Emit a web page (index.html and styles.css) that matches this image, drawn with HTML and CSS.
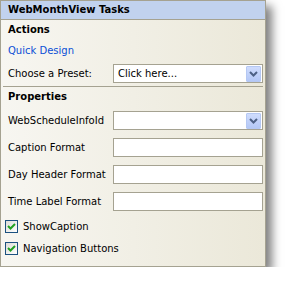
FILE: index.html
```html
<!DOCTYPE html>
<html lang="en">
<head>
  <meta charset="UTF-8" />
  <title>WebMonthView Tasks</title>
  <link rel="stylesheet" href="styles.css">
</head>
<body>
  <div class="panel">
    <div class="title">WebMonthView Tasks</div>
    <div class="content">
      <div class="heading">Actions</div>
      <div class="link-row"><a href="#" class="link">Quick Design</a></div>
      <div class="row preset">
        <span class="label">Choose a Preset:</span>
        <div class="box combo">
          <span class="value">Click here...</span>
          <span class="drop">
            <svg width="9" height="6" viewBox="0 0 9 6"><path d="M1 1 L4.5 4.5 L8 1" fill="none" stroke="#4d6185" stroke-width="2"/></svg>
          </span>
        </div>
      </div>
      <div class="sep"></div>
      <div class="heading">Properties</div>
      <div class="row">
        <span class="label">WebScheduleInfoId</span>
        <div class="box combo">
          <span class="value"></span>
          <span class="drop">
            <svg width="9" height="6" viewBox="0 0 9 6"><path d="M1 1 L4.5 4.5 L8 1" fill="none" stroke="#4d6185" stroke-width="2"/></svg>
          </span>
        </div>
      </div>
      <div class="row">
        <span class="label">Caption Format</span>
        <div class="box"></div>
      </div>
      <div class="row">
        <span class="label">Day Header Format</span>
        <div class="box"></div>
      </div>
      <div class="row">
        <span class="label">Time Label Format</span>
        <div class="box"></div>
      </div>
      <div class="check-row">
        <span class="check">
          <svg width="9" height="9" viewBox="0 0 9 9"><path d="M1 4 L3.5 6.5 L8 2" fill="none" stroke="#21a121" stroke-width="2"/></svg>
        </span>
        <span>ShowCaption</span>
      </div>
      <div class="check-row">
        <span class="check">
          <svg width="9" height="9" viewBox="0 0 9 9"><path d="M1 4 L3.5 6.5 L8 2" fill="none" stroke="#21a121" stroke-width="2"/></svg>
        </span>
        <span>Navigation Buttons</span>
      </div>
    </div>
  </div>
</body>
</html>
```

FILE: styles.css
```css
body {
  margin: 0;
  background: #fff;
  font-family: "DejaVu Sans", sans-serif;
  font-size: 10px;
  color: #000;
}

.panel {
  box-sizing: border-box;
  width: 266px;
  height: 267px;
  border: 1px solid #a5a291;
  background: linear-gradient(to right, #f7f6f1, #ebe8d9);
  box-shadow: 6px 6px 9px rgba(0, 0, 0, 0.5);
}

.title {
  height: 18px;
  line-height: 18px;
  padding-left: 7px;
  background: #c1d2ee;
  border-bottom: 1px solid #a5a291;
  font-weight: bold;
}

.content {
  padding: 0 2px 0 0;
}

.heading {
  height: 20px;
  line-height: 20px;
  padding-left: 7px;
  font-weight: bold;
}

.link-row {
  height: 21px;
  line-height: 21px;
  padding-left: 7px;
}

.link {
  color: #0a4fd6;
  text-decoration: none;
}

.row {
  display: flex;
  align-items: center;
  justify-content: space-between;
  height: 27px;
  padding-left: 7px;
}

.row.preset {
  height: 25px;
}

.box {
  box-sizing: border-box;
  width: 150px;
  height: 19px;
  border: 1px solid #a5a291;
  background: #fff;
}

.combo {
  display: flex;
  align-items: center;
  justify-content: space-between;
  padding: 0 1px 0 4px;
}

.drop {
  display: flex;
  align-items: center;
  justify-content: center;
  width: 13px;
  height: 14px;
  border: 1px solid #b5c8f3;
  border-radius: 1px;
  background: linear-gradient(#cfdcfd, #b4c8f6);
}

.sep {
  height: 1px;
  margin: 0 0 0 2px;
  background: #a5a291;
}

.check-row {
  display: flex;
  align-items: center;
  gap: 5px;
  height: 22px;
  padding-left: 4px;
}

.check {
  display: flex;
  align-items: center;
  justify-content: center;
  box-sizing: border-box;
  width: 13px;
  height: 13px;
  border: 1px solid #1c5180;
  background: linear-gradient(135deg, #dcdcd7, #fff);
}
```
